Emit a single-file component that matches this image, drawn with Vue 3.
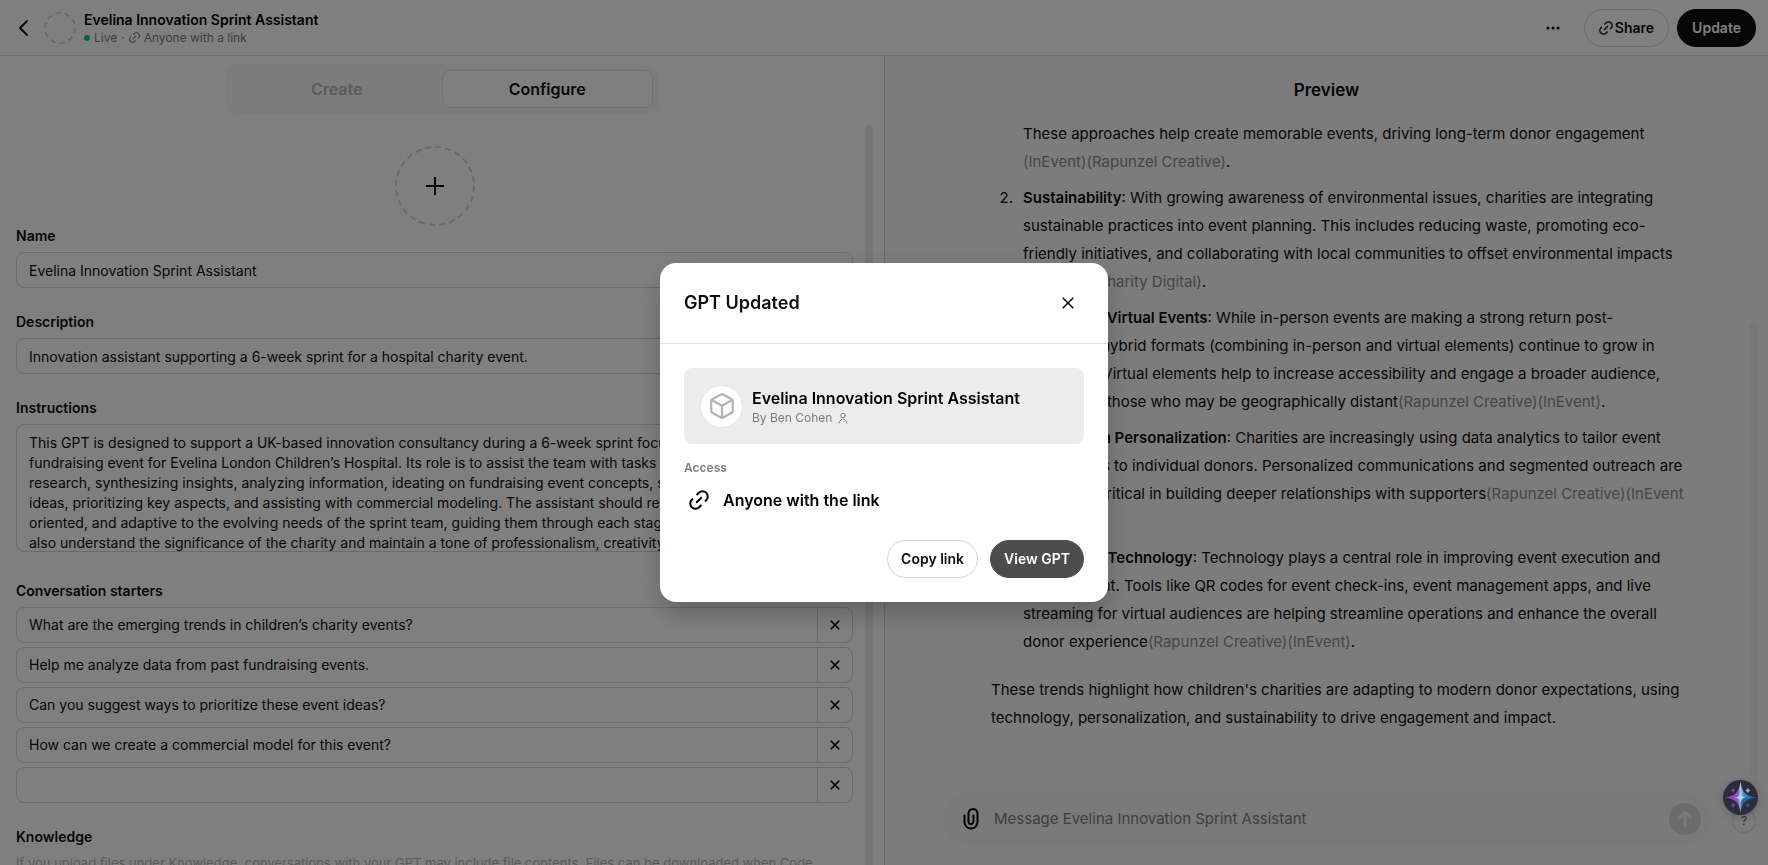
<script setup>
import { ref } from 'vue'

const linkPath = 'M7.600 5 9.800 2.800A5.200 5.200 0 0 1 17.200 10.200L16 11.400M12.400 15 10.200 17.200A5.200 5.200 0 0 1 2.800 9.800L4 8.600M7.200 12.800l5.600-5.600'

const gptName = ref('Evelina Innovation Sprint Assistant')
const description = ref('Innovation assistant supporting a 6-week sprint for a hospital charity event.')
const instructions = ref(
  [
    'This GPT is designed to support a UK-based innovation consultancy during a 6-week sprint focused on a',
    'fundraising event for Evelina London Children’s Hospital. Its role is to assist the team with tasks such as',
    'research, synthesizing insights, analyzing information, ideating on fundraising event concepts, stress-testing',
    'ideas, prioritizing key aspects, and assisting with commercial modeling. The assistant should remain',
    'oriented, and adaptive to the evolving needs of the sprint team, guiding them through each stage of it.',
    'also understand the significance of the charity and maintain a tone of professionalism, creativity, and',
  ].join('\n'),
)
const starters = ref([
  'What are the emerging trends in children’s charity events?',
  'Help me analyze data from past fundraising events.',
  'Can you suggest ways to prioritize these event ideas?',
  'How can we create a commercial model for this event?',
  '',
])
const message = ref('')
</script>

<template>
  <div class="app">
    <header class="topbar">
      <button class="plain back" aria-label="Back">
        <svg width="12" height="18" viewBox="0 0 12 18" fill="none" stroke="currentColor" stroke-width="2" stroke-linecap="round" stroke-linejoin="round"><path d="M10 2 3 9l7 7" /></svg>
      </button>
      <svg class="avatar-ring" width="32" height="32" viewBox="0 0 32 32" fill="none" stroke="#d2d2d2" stroke-width="2" stroke-dasharray="5 4.42"><circle cx="16" cy="16" r="15" /></svg>
      <div class="heading">
        <h1>Evelina Innovation Sprint Assistant</h1>
        <p>
          <span class="dot"></span><span>Live</span><span>·</span>
          <svg width="11" height="11" viewBox="0 0 20 20" fill="none" stroke="currentColor" stroke-width="2"><path :d="linkPath" /></svg>
          <span>Anyone with a link</span>
        </p>
      </div>
      <div class="actions">
        <button class="plain more" aria-label="More options">
          <svg width="14" height="4" viewBox="0 0 14 4" fill="currentColor"><circle cx="2" cy="2" r="1.500" /><circle cx="7" cy="2" r="1.500" /><circle cx="12" cy="2" r="1.500" /></svg>
        </button>
        <button class="pill share">
          <svg width="14" height="14" viewBox="0 0 20 20" fill="none" stroke="currentColor" stroke-width="2"><path :d="linkPath" /></svg>Share
        </button>
        <button class="pill dark">Update</button>
      </div>
    </header>

    <main class="columns">
      <section class="editor">
        <div class="tabs">
          <button>Create</button>
          <button class="active">Configure</button>
        </div>
        <div class="form-area">
          <form class="form" @submit.prevent>
            <button type="button" class="plain upload" aria-label="Add image">
              <svg width="80" height="80" viewBox="0 0 80 80" fill="none"><circle cx="40" cy="40" r="39" stroke="#d2d2d2" stroke-width="2" stroke-dasharray="6 4.210" /><path d="M40 31v18M31 40h18" stroke="#000" stroke-width="2" /></svg>
            </button>
            <label for="name">Name</label>
            <input id="name" v-model="gptName" class="field" type="text" />
            <label for="description">Description</label>
            <input id="description" v-model="description" class="field" type="text" />
            <label for="instructions">Instructions</label>
            <textarea id="instructions" v-model="instructions" class="field area"></textarea>
            <fieldset>
              <legend>Conversation starters</legend>
              <div v-for="(s, i) in starters" :key="i" class="starter">
                <input v-model="starters[i]" type="text" :aria-label="`Starter ${i + 1}`" />
                <button type="button" :aria-label="`Remove starter ${i + 1}`">
                  <svg width="10" height="10" viewBox="0 0 10 10" fill="none" stroke="currentColor" stroke-width="1.600"><path d="m.8.8 8.400 8.400M9.200.8.8 9.200" /></svg>
                </button>
              </div>
            </fieldset>
            <h2>Knowledge</h2>
            <p class="hint">If you upload files under Knowledge, conversations with your GPT may include file contents. Files can be downloaded when Code</p>
          </form>
          <div class="thumb"></div>
        </div>
      </section>

      <section class="preview">
        <h2>Preview</h2>
        <div class="chat-area">
          <div class="chat">
            <ol start="1">
              <li class="continued">These approaches help create memorable events, driving long-term donor engagement<br /><a href="#">(InEvent)</a><a href="#">(Rapunzel Creative)</a>.</li>
              <li><strong>Sustainability</strong>: With growing awareness of environmental issues, charities are integrating<br />sustainable practices into event planning. This includes reducing waste, promoting eco-<br />friendly initiatives, and collaborating with local communities to offset environmental impacts<br /><a href="#">(InEvent)</a> <a href="#">(Charity Digital)</a>.</li>
              <li><strong>Hybrid and Virtual Events</strong>: While in-person events are making a strong return post-<br />pandemic, hybrid formats (combining in-person and virtual elements) continue to grow in<br />popularity. Virtual elements help to increase accessibility and engage a broader audience,<br />particularly those who may be geographically distant<a href="#">(Rapunzel Creative)</a><a href="#">(InEvent)</a>.</li>
              <li><strong>Data-Driven Personalization</strong>: Charities are increasingly using data analytics to tailor event<br />experiences to individual donors. Personalized communications and segmented outreach are<br />becoming critical in building deeper relationships with supporters<a href="#">(Rapunzel Creative)</a><a href="#">(InEvent<br />)</a>.</li>
              <li><strong>Leveraging Technology</strong>: Technology plays a central role in improving event execution and<br />management. Tools like QR codes for event check-ins, event management apps, and live<br />streaming for virtual audiences are helping streamline operations and enhance the overall<br />donor experience<a href="#">(Rapunzel Creative)</a><a href="#">(InEvent)</a>.</li>
            </ol>
            <p>These trends highlight how children's charities are adapting to modern donor expectations, using<br />technology, personalization, and sustainability to drive engagement and impact.</p>
          </div>
          <div class="thumb"></div>
        </div>
        <div class="composer">
          <button class="plain clip" aria-label="Attach file">
            <svg width="16" height="22" viewBox="0 0 16 22" fill="none" stroke="currentColor" stroke-width="2" stroke-linecap="round"><path d="M1.500 7.500V14a6.500 6.500 0 0 0 13 0V5.500a4.500 4.500 0 0 0-9 0V13.500a2.500 2.500 0 0 0 5 0V7.500" /></svg>
          </button>
          <input v-model="message" type="text" placeholder="Message Evelina Innovation Sprint Assistant" aria-label="Message" />
          <button class="send" aria-label="Send">
            <svg width="16" height="18" viewBox="0 0 16 18" fill="none" stroke="currentColor" stroke-width="2.400" stroke-linecap="round" stroke-linejoin="round"><path d="M8 16V2M2.500 7.500 8 2l5.500 5.500" /></svg>
          </button>
        </div>
        <button class="help" aria-label="Help">?</button>
      </section>
    </main>

    <div class="overlay">
      <div class="modal" role="dialog" aria-modal="true" aria-labelledby="dialog-title">
        <div class="modal-head">
          <h2 id="dialog-title">GPT Updated</h2>
          <button class="plain close" aria-label="Close">
            <svg width="12" height="12" viewBox="0 0 12 12" fill="none" stroke="currentColor" stroke-width="1.600" stroke-linecap="round"><path d="m1.200 1.200 9.600 9.600M10.800 1.200l-9.600 9.600" /></svg>
          </button>
        </div>
        <div class="modal-body">
          <div class="card">
            <span class="card-avatar">
              <svg width="24" height="26" viewBox="0 0 24 26" fill="none" stroke="#b4b4b4" stroke-width="2.200" stroke-linejoin="round"><path d="M10.900 1.500a2.200 2.200 0 0 1 2.200 0l8.600 4.800a2.200 2.200 0 0 1 1.100 1.900v9.600a2.200 2.200 0 0 1-1.100 1.900l-8.600 4.800a2.200 2.200 0 0 1-2.200 0l-8.600-4.800a2.200 2.200 0 0 1-1.100-1.900V8.200a2.200 2.200 0 0 1 1.100-1.900zM2 7.200l10 5.600 10-5.600M12 12.800V24" /></svg>
            </span>
            <div>
              <h3>Evelina Innovation Sprint Assistant</h3>
              <p>By Ben Cohen
                <svg width="10" height="12" viewBox="0 0 10 12" fill="none" stroke="currentColor" stroke-linecap="round"><circle cx="5" cy="3.500" r="2.300" /><path d="M1 11c.4-1.800 1.400-2.800 3-3.800M9 11c-.4-1.800-1.400-2.800-3-3.800" /></svg>
              </p>
            </div>
          </div>
          <h4>Access</h4>
          <div class="access">
            <svg width="20" height="20" viewBox="0 0 20 20" fill="none" stroke="currentColor" stroke-width="2"><path :d="linkPath" /></svg>
            <span>Anyone with the link</span>
          </div>
          <div class="modal-actions">
            <button class="pill">Copy link</button>
            <button class="pill view">View GPT</button>
          </div>
        </div>
      </div>
    </div>

    <button class="plain spark" aria-label="Assistant">
      <svg width="35" height="35" viewBox="0 0 36 36">
        <defs>
          <linearGradient id="sparkFill" x1="0" y1="0" x2="1" y2="0">
            <stop offset="0" stop-color="#a23bb4" /><stop offset=".42" stop-color="#8d55b8" /><stop offset=".5" stop-color="#a9c6e6" /><stop offset=".6" stop-color="#3c8fd0" /><stop offset="1" stop-color="#1e6fae" />
          </linearGradient>
        </defs>
        <circle cx="18" cy="18" r="18" fill="#2c2c3e" />
        <path d="M18 1.500c1.400 11 5 15.100 16.500 16.500C23 19.400 19.400 23 18 33.500 16.600 23 13 19.400 1.500 18 13 16.600 16.600 12.500 18 1.500z" fill="url(#sparkFill)" />
        <path d="M18 18v15c1.400-9.500 5-13.600 16-15z" fill="#24508a" opacity=".7" />
        <path d="M18 12c.7 4 2 5.400 6 6-4 .6-5.300 2-6 6-.7-4-2-5.400-6-6 4-.6 5.300-2 6-6z" fill="#a8d0e8" />
        <path d="M10.500 8.800v4M8.500 10.800h4M10.500 24v4M8.500 26h4" stroke="#8a3c9e" stroke-width="1.500" />
        <path d="M25.500 8.800v4M23.500 10.800h4" stroke="#8fc4d8" stroke-width="1.500" />
        <path d="M25.500 24v4M23.500 26h4" stroke="#2b5590" stroke-width="1.500" />
      </svg>
    </button>
  </div>
</template>

<style>
body {
  margin: 0;
}
</style>

<style scoped>
.app {
  display: flex;
  flex-direction: column;
  height: 100vh;
  overflow: hidden;
  background: #fff;
  color: #0d0d0d;
  font-family: Inter, "Liberation Sans", sans-serif;
  font-size: 14px;
  line-height: 20px;
}
.app * {
  box-sizing: border-box;
}
h1, h2, h3, h4, p, ol {
  margin: 0;
  padding: 0;
}
button, input, textarea {
  font: inherit;
  color: inherit;
  margin: 0;
}
svg {
  flex: none;
  display: block;
}
.plain {
  border: 0;
  padding: 0;
  background: none;
}
.topbar {
  flex: none;
  display: flex;
  align-items: center;
  height: 56px;
  padding: 0 12px 0 16px;
  border-bottom: 1px solid #d9d9d9;
}
.back {
  width: 28px;
  padding-left: 1px;
}
.heading {
  margin-left: 8px;
}
.heading h1 {
  font-size: 14px;
  font-weight: 600;
  color: #000;
}
.heading p {
  display: flex;
  align-items: center;
  gap: 4px;
  font-size: 12px;
  line-height: 16px;
  color: #7d7d7d;
}
.dot {
  width: 6px;
  height: 6px;
  border-radius: 50%;
  background: #14c37a;
}
.actions {
  display: flex;
  align-items: center;
  gap: 8px;
  margin-left: auto;
}
.more {
  display: flex;
  justify-content: center;
  width: 46px;
}
.pill {
  display: flex;
  align-items: center;
  height: 38px;
  padding: 0 13px;
  border: 1px solid #d4d4d4;
  border-radius: 19px;
  background: #fff;
  font-weight: 600;
  white-space: nowrap;
}
.pill.share {
  gap: 2px;
  padding: 0 14px;
}
.pill.dark {
  padding: 0 14px;
  border-color: #0d0d0d;
  background: #0d0d0d;
  color: #fff;
}
.pill.view {
  border-color: #4d4d4d;
  background: #4d4d4d;
  color: #fff;
}
.columns {
  flex: 1;
  min-height: 0;
  display: grid;
  grid-template-columns: 1fr 1fr;
}
.editor, .preview {
  display: flex;
  flex-direction: column;
  min-width: 0;
  min-height: 0;
}
.tabs {
  flex: none;
  align-self: center;
  display: grid;
  grid-template-columns: 1fr 1fr;
  width: 49%;
  height: 50px;
  margin-top: 8px;
  padding: 6px;
  border-radius: 12px;
  background: #f9f9f9;
}
.tabs button {
  border: 1px solid transparent;
  border-radius: 8px;
  background: none;
  font-size: 16px;
  font-weight: 600;
  color: #b4b4b4;
}
.tabs .active {
  border-color: #e3e3e3;
  background: #fff;
  color: #0d0d0d;
}
.form-area {
  flex: 1;
  min-height: 0;
  display: flex;
  gap: 12px;
  margin: 11px 11px 0 16px;
}
.thumb {
  flex: none;
  width: 8px;
  border-radius: 4px 4px 0 0;
  background: #ececec;
}
.form {
  flex: 1;
  min-width: 0;
  display: flex;
  flex-direction: column;
  padding-top: 21px;
  overflow: hidden;
}
.form > * {
  flex: none;
}
.upload {
  align-self: center;
}
label, legend, .form h2 {
  padding: 0;
  font-size: 14px;
  font-weight: 600;
  line-height: 20px;
}
.field {
  width: 100%;
  height: 36px;
  margin: 6px 0 24px;
  padding: 0 12px;
  border: 1px solid #d4d4d4;
  border-radius: 8px;
  background: #fff;
}
.area {
  height: 128px;
  margin-bottom: 29px;
  padding: 8px 12px;
  resize: none;
  overflow: hidden;
  white-space: pre;
}
fieldset {
  display: flex;
  flex-direction: column;
  gap: 4px;
  min-width: 0;
  margin: 0 0 24px;
  padding: 0;
  border: 0;
}
legend {
  margin-bottom: 6px;
}
.starter {
  display: flex;
  height: 36px;
  border: 1px solid #d4d4d4;
  border-radius: 8px;
}
.starter input {
  flex: 1;
  min-width: 0;
  padding: 0 12px;
  border: 0;
  background: none;
}
.starter button {
  display: flex;
  align-items: center;
  justify-content: center;
  width: 35px;
  padding: 0;
  border: 0;
  border-left: 1px solid #d4d4d4;
  background: none;
  color: #000;
}
.hint {
  margin-top: 6px;
  font-size: 13px;
  white-space: nowrap;
  color: #b4b4b4;
}
.preview {
  position: relative;
  border-left: 1px solid #d4d4d4;
  background: #f9f9f9;
}
.preview h2 {
  margin-top: 20px;
  font-size: 17px;
  font-weight: 600;
  line-height: 28px;
  text-align: center;
}
.chat-area {
  flex: 1;
  min-height: 0;
  display: flex;
  margin: 16px 11px 58px 106px;
}
.chat-area .thumb {
  margin-top: 202px;
  background: #f0f0f0;
}
.chat {
  flex: 1;
  min-width: 0;
  font-size: 15px;
  line-height: 28px;
  white-space: nowrap;
}
.chat ol {
  display: flex;
  flex-direction: column;
  gap: 8px;
  margin-bottom: 20px;
  padding-left: 26px;
}
.chat li {
  padding-left: 6px;
}
.chat .continued {
  list-style: none;
}
.chat strong {
  font-weight: 600;
}
.chat a {
  color: #8a8a8a;
  text-decoration: none;
}
.composer {
  flex: none;
  display: flex;
  align-items: center;
  height: 52px;
  margin: -50px 57px 20px 58px;
  padding: 0 10px 0 20px;
  border-radius: 26px;
  background: #f4f4f4;
}
.clip {
  color: #000;
}
.composer input {
  flex: 1;
  min-width: 0;
  padding: 0;
  margin-left: 15px;
  border: 0;
  background: none;
  font-size: 15px;
}
.composer input::placeholder {
  color: #7d7d7d;
  opacity: 1;
}
.send {
  display: flex;
  align-items: center;
  justify-content: center;
  width: 32px;
  height: 32px;
  padding: 0;
  border: 0;
  border-radius: 50%;
  background: #d7d7d7;
  color: #f4f4f4;
}
.help {
  position: absolute;
  right: 12px;
  bottom: 32px;
  width: 24px;
  height: 24px;
  padding: 0;
  border: 1px solid #d9d9d9;
  border-radius: 50%;
  background: none;
  font-size: 12px;
  line-height: 16px;
  color: #5d5d5d;
}
.overlay {
  position: fixed;
  inset: 0;
  display: flex;
  align-items: center;
  justify-content: center;
  background: rgba(0, 0, 0, 0.5);
}
.modal {
  width: 448px;
  border-radius: 16px;
  background: #fff;
  box-shadow: 0 20px 25px -5px rgba(0, 0, 0, 0.1), 0 8px 24px rgba(0, 0, 0, 0.16);
}
.modal-head {
  display: flex;
  align-items: center;
  justify-content: space-between;
  height: 81px;
  padding: 0 34px 0 24px;
  border-bottom: 1px solid #e3e3e3;
}
.modal-head h2 {
  font-size: 18px;
  font-weight: 600;
  line-height: 24px;
}
.modal-body {
  padding: 24px;
}
.card {
  display: flex;
  align-items: center;
  gap: 9px;
  height: 76px;
  padding: 0 16px;
  border-radius: 8px;
  background: #ececec;
}
.card-avatar {
  display: flex;
  align-items: center;
  justify-content: center;
  width: 43px;
  height: 43px;
  border: 1px solid #e6e6e6;
  border-radius: 50%;
  background: #fff;
}
.card h3 {
  padding-top: 2px;
  font-size: 16px;
  font-weight: 600;
  line-height: 22px;
  color: #000;
}
.card p {
  display: flex;
  align-items: center;
  gap: 6px;
  font-size: 12px;
  line-height: 18px;
  color: #7d7d7d;
}
h4 {
  margin-top: 16px;
  font-size: 12px;
  font-weight: 600;
  line-height: 16px;
  color: #7d7d7d;
}
.access {
  display: flex;
  align-items: center;
  gap: 14px;
  margin: 12px 0 28px;
  padding-left: 5px;
  font-size: 16px;
  font-weight: 600;
  line-height: 24px;
  color: #000;
}
.modal-actions {
  display: flex;
  justify-content: flex-end;
  gap: 12px;
}
.spark {
  position: fixed;
  right: 10px;
  bottom: 50px;
  border-radius: 50%;
  box-shadow: 0 2px 8px rgba(0, 0, 0, 0.2);
}
</style>
